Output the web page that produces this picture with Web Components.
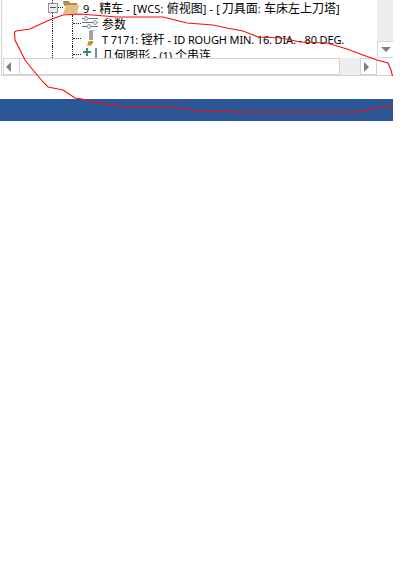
<!DOCTYPE html>
<html>
<head>
<meta charset="utf-8">
<style>
  html, body { margin: 0; background: #fff; }
</style>
</head>
<body>
<cam-window>
  <tree-row slot="rows" kind="root" icon="folder" style="--track:.18px">9 - <cjk-text>精车</cjk-text> - [WCS: <cjk-text>俯视图</cjk-text>] - [<cjk-text class="tuck">刀具面</cjk-text>: <cjk-text>车床左上刀塔</cjk-text>]</tree-row>
  <tree-row slot="rows" tall icon="params"><cjk-text>参数</cjk-text></tree-row>
  <tree-row slot="rows" icon="tool" style="--track:-.14px">T 7171: <cjk-text>镗杆</cjk-text> - ID ROUGH MIN. 16. DIA. - 80 DEG.</tree-row>
  <tree-row slot="rows" tall icon="geometry"><cjk-text>几何图形</cjk-text> - (1) <cjk-text>个串连</cjk-text></tree-row>
</cam-window>

<script>
const ICONS = {
  folder: `<svg width="17" height="15" viewBox="0 0 17 15">
    <path d="M0 1h6l1 2h7v2L1 6z" fill="#b08a52"/>
    <path d="M3 5h13l-2 9H0z" fill="#e3bf85"/>
  </svg>`,
  params: `<svg width="18" height="16" viewBox="0 0 18 16">
    <path d="M1 3.5h16M1 7.5h16M1 11.5h16" stroke="#6b6b6b" fill="none"/>
    <path d="M9 15.5h4" stroke="#a8a8a8" fill="none"/>
    <circle cx="5" cy="3.5" r="2" fill="#dbe8f2" stroke="#7fa6c6"/>
    <circle cx="14" cy="7.5" r="2" fill="#dbe8f2" stroke="#7fa6c6"/>
    <circle cx="8" cy="11.5" r="2" fill="#dbe8f2" stroke="#7fa6c6"/>
  </svg>`,
  tool: `<svg width="18" height="15" viewBox="0 0 18 15">
    <path d="M8 0h4v9H8z" fill="#a3a3a3"/>
    <path d="M8 10h4v2l-2 2.5H6l1-3z" fill="#c9960f"/>
  </svg>`,
  geometry: `<svg width="18" height="16" viewBox="0 0 18 16">
    <path d="M2 6h8M6 2v8" stroke="#3f8a6f" stroke-width="2" fill="none"/>
    <path d="M14 2h2v14h-2z" fill="#5f9c8a"/>
  </svg>`
};

class CjkText extends HTMLElement {
  constructor() {
    super();
    this.shadowDOM = this.attachShadow({ mode: "open" });
  }

  connectedCallback() {
    this.shadowDOM.innerHTML = `
    <style>
      :host { font: 12px "Noto Sans CJK SC", sans-serif; letter-spacing: 0; }
      :host(.tuck) { margin-left: -1px; }
    </style>
    <slot></slot>`;
  }
}

class TreeRow extends HTMLElement {
  constructor() {
    super();
    this.shadowDOM = this.attachShadow({ mode: "open" });
  }

  connectedCallback() {
    const root = this.getAttribute("kind") === "root";
    const icon = ICONS[this.getAttribute("icon")];
    this.shadowDOM.innerHTML = `
    <style>
      :host {
        display: flex;
        align-items: center;
        height: 15px;
        white-space: nowrap;
        font: 11px "Noto Sans", "Noto Sans CJK SC", sans-serif;
        letter-spacing: var(--track, 0);
        color: #000;
      }
      :host([tall]) { height: 16px; }
      .guide { align-self: stretch; width: 0; border-left: 1px dotted #222; flex: none; }
      .dots { width: 8px; height: 0; border-top: 1px dotted #222; flex: none; }
      .box {
        position: relative;
        box-sizing: border-box;
        width: 10px;
        height: 10px;
        border: 1px solid #8f8f8f;
        background: #eee;
        display: flex;
        align-items: center;
        justify-content: center;
        flex: none;
      }
      .box i { width: 6px; height: 1px; background: #4a5a78; }
      .box::before, .box::after {
        content: "";
        position: absolute;
        left: 3px;
        height: 3px;
        border-left: 1px dotted #222;
      }
      .box::before { bottom: 100%; margin-bottom: 1px; }
      .box::after { top: 100%; margin-top: 1px; }
      .icon { display: flex; flex: none; align-self: flex-start; }
      .root-gap { width: 48px; flex: none; }
      .branch-gap { width: 52px; flex: none; }
      .inner-gap { width: 19px; flex: none; }
      .label { margin-left: 3px; }
    </style>
    ${root
      ? `<span class="root-gap"></span><span class="box"><i></i></span>
         <span class="dots" style="width:5px"></span><span class="icon">${icon}</span>`
      : `<span class="branch-gap"></span><span class="guide"></span><span class="inner-gap"></span>
         <span class="guide"></span><span class="dots"></span><span class="icon">${icon}</span>`}
    <span class="label"><slot></slot></span>`;
  }
}

class ScrollButton extends HTMLElement {
  constructor() {
    super();
    this.shadowDOM = this.attachShadow({ mode: "open" });
  }

  connectedCallback() {
    const arrows = {
      left: "M6 2v10L1 7z",
      right: "M2 2v10l5-5z",
      down: "M2 4h10L7 9z"
    };
    this.shadowDOM.innerHTML = `
    <style>
      :host {
        box-sizing: border-box;
        display: flex;
        align-items: center;
        justify-content: center;
        flex: none;
        background: #fff;
        border: 1px solid #d4d4d4;
      }
      svg { display: block; }
    </style>
    <svg width="14" height="14" viewBox="0 0 14 14"><path d="${arrows[this.getAttribute("dir")]}" fill="#7f7f7f"/></svg>`;
  }
}

class CamWindow extends HTMLElement {
  constructor() {
    super();
    this.shadowDOM = this.attachShadow({ mode: "open" });
  }

  connectedCallback() {
    this.shadowDOM.innerHTML = `
    <style>
      :host { display: block; position: relative; width: 393px; height: 562px; }
      .panel {
        box-sizing: border-box;
        height: 76px;
        margin-left: 1px;
        border-left: 1px solid #d4d4d4;
        border-bottom: 1px solid #d4d4d4;
        display: grid;
        grid-template-columns: 1fr 16px;
        grid-template-rows: 58px 17px;
      }
      .tree { overflow: hidden; margin-left: -2px; }
      .vbar { background: #eee; display: flex; flex-direction: column; justify-content: flex-end; }
      .vbar scroll-button { width: 16px; height: 17px; border-right: 0; }
      .hbar { grid-column: 1 / 3; display: flex; background: #eee; margin-left: 1px; }
      .hbar scroll-button { width: 17px; }
      .thumb { box-sizing: border-box; width: 320px; background: #fff; border: 1px solid #d4d4d4; border-left-width: 0; flex: none; }
      .spacer { flex: 1; }
      .hbar .end { width: 16px; flex: none; background: #fff; }
      .status { margin-top: 23px; height: 22px; background: #2b5797; }
      svg.ink { position: absolute; left: 0; top: 0; pointer-events: none; }
    </style>
    <div class="panel">
      <div class="tree"><slot name="rows"></slot></div>
      <div class="vbar"><scroll-button dir="down"></scroll-button></div>
      <div class="hbar">
        <scroll-button dir="left"></scroll-button>
        <div class="thumb"></div>
        <div class="spacer"></div>
        <scroll-button dir="right"></scroll-button>
        <div class="end"></div>
      </div>
    </div>
    <div class="status"></div>
    <svg class="ink" width="393" height="125" viewBox="0 0 393 125">
      <path fill="none" stroke="#ff0a0a" stroke-width="1.1"
        d="M392.5 76 391 70 388 63 377 60 363 55 347 49 327 43 300 42 282 38 258 37 243 31 227 28 213 25 200 24 187 23 163 17 117 17 80 14 63 15 52 19 45 22 30 29 16 31 14.5 32 15 40 20 50 25 60 33 70 43 82 48 87 63 90 75 98 82 99 97 103 127 107 167 107 172 107 193 110 210 111 237 112 357 112 367 110 377 108 393 106"/>
    </svg>`;
  }
}

customElements.define("cjk-text", CjkText);
customElements.define("tree-row", TreeRow);
customElements.define("scroll-button", ScrollButton);
customElements.define("cam-window", CamWindow);
</script>
</body>
</html>
